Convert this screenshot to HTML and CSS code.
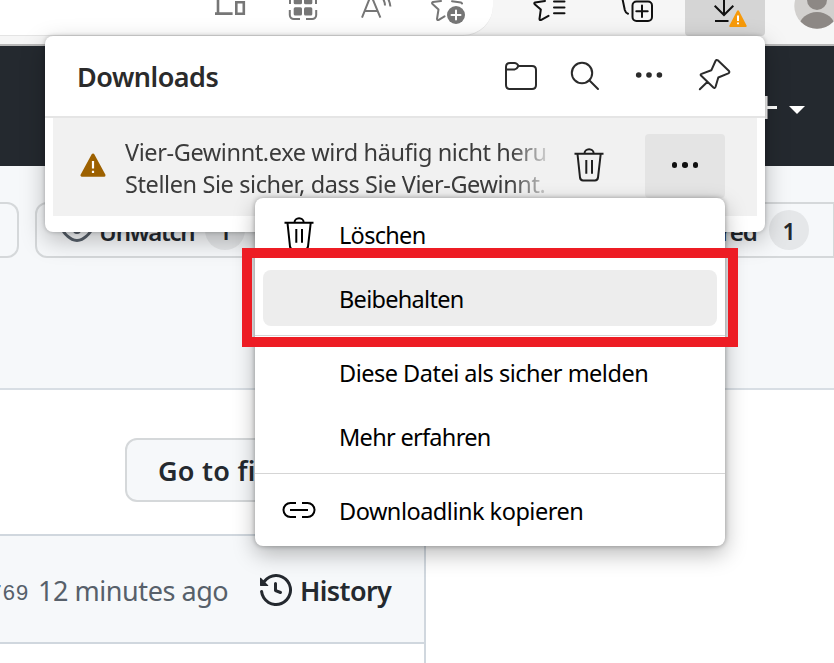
FILE: index.html
```html
<!DOCTYPE html>
<html lang="de">
<head>
<meta charset="utf-8">
<title>Downloads</title>
<link rel="stylesheet" href="styles.css">
</head>
<body>
<div class="window">
  <header class="toolbar">
    <div class="address">
      <svg class="i-devices" width="34" height="24" viewBox="213 0 34 24" fill="none" stroke="#767676" stroke-width="2.6"><path d="M218 0V13M215 13.6H232.6M236.3 2.2H243.8V13.8H236.3Z"/></svg>
      <svg class="i-qr" width="32" height="24" viewBox="287 0 32 24" fill="none" stroke="#767676" stroke-width="2"><path d="M290 0V4M316 0V4M289.8 10V15A4 4 0 0 0 294 19H300M306 19H312A4 4 0 0 0 316.2 15V10"/><g fill="#767676" stroke="none"><rect x="293.7" y="-4" width="8.3" height="8.3" rx="1.5"/><rect x="304" y="-4" width="8.3" height="8.3" rx="1.5"/><rect x="293.7" y="7.2" width="8.3" height="8.3" rx="1.5"/><rect x="304" y="7.2" width="8.3" height="8.3" rx="1.5"/></g></svg>
      <svg class="i-read" width="32" height="24" viewBox="360 0 32 24" fill="none" stroke="#767676" stroke-width="2"><path d="M362 17.7L371 -5L380.4 17.7M365 11H377.5M382.5 -2Q384.7 1 385 5.5M387 -3Q389.8 1 390.4 6.5"/></svg>
      <svg class="i-fav" width="38" height="26" viewBox="429 0 38 26" fill="none" stroke="#767676" stroke-width="2" stroke-linejoin="round" stroke-linecap="round"><path d="M441 1L433 2Q431.3 2.8 432.5 4L438.5 9.5L437 19Q437.2 20.6 438.8 19.8L444.5 16.3M452 1.2L461 2.4L462 3.5"/><circle cx="456" cy="15" r="9" fill="#767676" stroke="none"/><path d="M456 10.5V19.5M451.5 15H460.5" stroke="#fff"/></svg>
    </div>
    <svg class="i-favs" width="36" height="24" viewBox="531 0 36 24" fill="none" stroke="#111" stroke-width="2" stroke-linejoin="round" stroke-linecap="round"><path d="M545 1L535 2.4Q533.5 3 535 4.4L540.8 9.5L539.5 19Q539.8 20.7 541.3 19.8L548.5 15.8M554 1.5H564.5M554 7.5H564.5M554 13.3H564.5"/></svg>
    <svg class="i-coll" width="34" height="24" viewBox="621 0 34 24" fill="none" stroke="#111" stroke-width="2" stroke-linecap="round"><path d="M622.5 -1L624.8 10Q625.6 13 628 13.8M642 5.5V17M636.3 11.2H647.7"/><rect x="632.5" y="1.5" width="19.5" height="19.5" rx="4"/></svg>
    <div class="dl-button"><svg width="36" height="30" viewBox="713 0 36 30" fill="none" stroke="#111" stroke-width="2"><path d="M724 0V14.5M714.7 5.7L724 15L733.3 5.7M715 21H728.5"/><path d="M738 11.3L730.3 26H745.7Z" fill="#f79a0a" stroke="#f79a0a" stroke-linejoin="round"/><path d="M738 15.5V21M738 22.5V24.3" stroke="#fff"/></svg></div>
    <svg class="i-avatar" width="40" height="30" viewBox="794 0 40 30"><clipPath id="face"><circle cx="817" cy="6" r="22.7"/></clipPath><g clip-path="url(#face)"><rect x="794" y="0" width="40" height="30" fill="#d2d0ce"/><circle cx="817" cy="0" r="10" fill="#8d8885"/><ellipse cx="817" cy="27.5" rx="18" ry="15.5" fill="#8d8885"/></g></svg>
  </header>
  <nav class="site-header">
    <svg width="52" height="26" viewBox="755 95 52 26"><path d="M755 107.5H777M766 96V119" stroke="#fff" stroke-width="3"/><path d="M789 106H805L797 114Z" fill="#fff"/></svg>
  </nav>
  <section class="repo-head">
    <div class="btn prev"></div>
    <div class="btn watch">
      <svg width="32" height="32" viewBox="0 0 16 16" fill="#57606a"><path fill-rule="evenodd" d="M1.679 7.932c.412-.621 1.242-1.75 2.366-2.717C5.175 4.242 6.527 3.5 8 3.5c1.473 0 2.824.742 3.955 1.715 1.124.967 1.954 2.096 2.366 2.717a.119.119 0 010 .136c-.412.621-1.242 1.75-2.366 2.717C10.825 11.758 9.473 12.5 8 12.5c-1.473 0-2.824-.742-3.955-1.715C2.92 9.818 2.09 8.69 1.679 8.068a.119.119 0 010-.136zM8 2c-1.981 0-3.67.992-4.933 2.078C1.797 5.169.88 6.423.43 7.1a1.619 1.619 0 000 1.798c.45.678 1.367 1.932 2.637 3.024C4.329 13.008 6.019 14 8 14c1.981 0 3.67-.992 4.933-2.078 1.27-1.091 2.187-2.345 2.637-3.023a1.619 1.619 0 000-1.798c-.45-.678-1.367-1.932-2.637-3.023C11.671 2.992 9.981 2 8 2zm0 8a2 2 0 100-4 2 2 0 000 4z"/></svg>
      <span class="watch-label">Unwatch</span><span class="count">1</span>
    </div>
    <div class="btn star"><span class="star-label">Starred</span><span class="count">1</span></div>
  </section>
  <main class="content">
    <div class="goto">Go to file</div>
    <div class="commits">
      <div class="commit-bar">
        <span class="hash">769</span><span class="ago">12 minutes ago</span>
        <svg width="32" height="32" viewBox="0 0 16 16" fill="#24292f"><path fill-rule="evenodd" d="M1.643 3.143L.427 1.927A.25.25 0 000 2.104V5.75c0 .138.112.25.25.25h3.646a.25.25 0 00.177-.427L2.715 4.215a6.5 6.5 0 11-1.18 4.458.75.75 0 10-1.493.154 8.001 8.001 0 101.6-5.684zM7.75 4a.75.75 0 01.75.75v2.992l2.028.812a.75.75 0 01-.557 1.392l-2.5-1A.75.75 0 017 8.25v-3.5A.75.75 0 017.75 4z"/></svg>
        <span class="history">History</span>
      </div>
    </div>
  </main>

  <aside class="flyout">
    <div class="flyout-head">
      <h1>Downloads</h1>
      <svg width="236" height="40" viewBox="500 56 236 40" fill="none" stroke="#2b2b2b" stroke-width="2" stroke-linejoin="round" stroke-linecap="round"><path d="M506 69V67Q506 63 510 63H514.5Q517 63 518.5 66H532Q536 66 536 70V85Q536 89 532 89H510Q506 89 506 85ZM506 69.5H514.5Q517 69 518.5 66"/><circle cx="582" cy="73" r="10.2"/><path d="M589.5 80.5L598 89"/><g fill="#2b2b2b" stroke="none"><circle cx="638.7" cy="75" r="2.8"/><circle cx="649" cy="75" r="2.8"/><circle cx="659.4" cy="75" r="2.8"/></g><path d="M717.8 60.3L729 71Q730 72.4 728.3 73.3L718.3 77.5L715.5 87Q714.8 88.8 713.4 87.5L701 75.5Q700 74.4 701.6 73.9L711.3 70.3L715.5 61Q716.4 59.3 717.8 60.3ZM699.8 89.2L707.3 82"/></svg>
    </div>
    <div class="download">
      <svg class="warn" width="26" height="24" viewBox="0 0 26 24"><path d="M13 2L2 22.2H24Z" fill="#9d6100" stroke="#9d6100" stroke-width="3" stroke-linejoin="round"/><path d="M13 8V15.5M13 17.7V20" stroke="#fff" stroke-width="2.2"/></svg>
      <div class="message"><p class="line1">Vier-Gewinnt.exe wird häufig nicht herun</p><p class="line2">Stellen Sie sicher, dass Sie Vier-Gewinnt.</p></div>
      <svg class="bin" width="30" height="34" viewBox="574 148 30 34" fill="none" stroke="#1f1f1f" stroke-width="2"><path d="M574.5 153.8H603.5M584.5 153.5A4.6 4.3 0 0 1 593.7 153.5M577.5 154L580 177.5Q580.4 180.4 583 180.4H595Q597.6 180.4 598 177.5L600.7 154M586.3 160V173.7M592 160V173.7"/></svg>
      <div class="more"><i></i><i></i><i></i></div>
    </div>
  </aside>

  <div class="menu">
    <div class="item"><svg width="30" height="34" viewBox="574 148 30 34" fill="none" stroke="#000" stroke-width="2"><path d="M574.5 153.8H603.5M584.5 153.5A4.6 4.3 0 0 1 593.7 153.5M577.5 154L580 177.5Q580.4 180.4 583 180.4H595Q597.6 180.4 598 177.5L600.7 154M586.3 160V173.7M592 160V173.7"/></svg><span class="tight">Löschen</span></div>
    <div class="item active"><span class="tight">Beibehalten</span></div>
    <hr>
    <div class="item"><span>Diese Datei als sicher melden</span></div>
    <div class="item"><span class="tight">Mehr erfahren</span></div>
    <hr>
    <div class="item"><svg class="link" width="34" height="18" viewBox="282 501 34 18" fill="none" stroke="#000" stroke-width="2"><path d="M296 503H290.5A7 7 0 0 0 290.5 517H296M302 503H307.5A7 7 0 0 1 307.5 517H302M290 510H308"/></svg><span>Downloadlink kopieren</span></div>
  </div>
  <div class="highlight"></div>
</div>
</body>
</html>
```
FILE: styles.css
```css
* { box-sizing: border-box; }
body { margin: 0; font-family: "Noto Sans", "Open Sans", sans-serif; }
svg { display: block; flex: none; }
span, h1, p { white-space: nowrap; }

.window { position: relative; width: 834px; height: 663px; overflow: hidden; background: #fff; }

.toolbar { display: flex; height: 46px; background: #f6f6f6; border-bottom: 2px solid #b9b9b9; }
.address { display: flex; width: 493px; height: 36px; background: #fff; border-bottom: 1px solid #e4e4e4; border-bottom-right-radius: 30px; }
.i-devices { margin-left: 213px; }
.i-qr { margin-left: 40px; }
.i-read { margin-left: 41px; }
.i-fav { margin-left: 37px; }
.i-favs { margin-left: 38px; }
.i-coll { margin-left: 54px; }
.dl-button { width: 80px; height: 36px; margin-left: 30px; padding-left: 28px; background: #d5d5d5; border-radius: 0 0 4px 4px; }
.i-avatar { margin-left: 29px; }

.site-header { height: 120px; padding: 49px 27px 0 0; display: flex; justify-content: flex-end; align-items: flex-start; background: #24292f; }

.repo-head { display: flex; height: 224px; padding-top: 36px; background: #f6f8fa; border-bottom: 2px solid #d8dee4; }
.btn { display: flex; align-items: center; height: 56px; border: 2px solid #d5d8da; border-radius: 12px; background: #f6f8fa; font-size: 24px; font-weight: 600; color: #24292f; }
.prev { width: 19px; border-left: 0; border-radius: 0 12px 12px 0; }
.watch { width: 300px; margin-left: 16px; padding-left: 24px; }
.watch-label { width: 107px; padding: 2px 0 0 6px; letter-spacing: -1.3px; }
.star { width: 234px; margin-left: 265px; padding-right: 24px; justify-content: flex-end; border-radius: 12px 0 0 12px; border-right-width: 1px; }
.star-label { margin-right: 12px; padding-top: 2px; letter-spacing: -0.9px; }
.count { display: flex; align-items: center; justify-content: center; width: 40px; height: 40px; margin-left: 5px; border-radius: 50%; background: #e5e7e9; font-size: 23px; font-weight: 600; padding-top: 2px; }
.star .count { margin-left: 0; }

.goto { display: flex; align-items: center; width: 190px; height: 64px; margin: 48px 0 0 125px; padding: 1px 0 0 31px; border: 2px solid #d5d8da; border-radius: 12px; background: #f6f8fa; font-size: 27px; font-weight: 600; letter-spacing: 0.25px; color: #24292f; }
.commits { width: 426px; height: 140px; margin-top: 32px; border: 2px solid #d0d7de; border-left: 0; }
.commit-bar { display: flex; align-items: center; height: 108px; border-bottom: 2px solid #d0d7de; background: #f6f8fa; color: #57606a; padding-top: 2px; }
.hash { width: 49px; margin-left: -11px; font: 22px "Liberation Mono", monospace; padding-top: 8px; }
.ago { width: 222px; font-size: 27px; letter-spacing: -0.45px; }
.history { margin-left: 8px; font-size: 27px; font-weight: 600; letter-spacing: -0.6px; color: #24292f; }

.flyout { position: absolute; left: 45px; top: 36px; width: 720px; height: 196px; border-radius: 8px; background: #fff; box-shadow: 0 8px 24px rgba(0,0,0,.26), 0 0 4px rgba(0,0,0,.24); }
.flyout-head { display: flex; align-items: center; justify-content: space-between; height: 82px; padding: 0 29px 0 32px; border-bottom: 2px solid #e5e5e5; }
h1 { margin: 0; font-size: 27px; font-weight: 600; letter-spacing: -0.5px; color: #2b2b2b; }
.download { display: flex; align-items: center; height: 98px; margin: 0 8px; padding: 0 32px 0 27px; background: #f1f1f1; }
.warn { margin-bottom: 4px; }
.message { width: 422px; height: 70px; margin-left: 19px; overflow: hidden; font-size: 23.5px; line-height: 32px; letter-spacing: -0.4px; color: #3b3b3b; -webkit-mask-image: linear-gradient(90deg, #000 385px, transparent 430px); mask-image: linear-gradient(90deg, #000 385px, transparent 430px); }
p { margin: 0; }
.line1 { padding-top: 4px; }
.bin { margin: 0 0 4px 27px; }
.more { display: flex; align-items: center; justify-content: center; gap: 5px; width: 80px; height: 64px; margin: -2px 0 0 41px; padding-bottom: 2px; border-radius: 4px; background: #e4e4e4; }
.more i { width: 5.6px; height: 5.6px; border-radius: 50%; background: #111; }

.menu { position: absolute; left: 255px; top: 198px; width: 470px; height: 348px; border-radius: 8px; background: #fff; box-shadow: 0 8px 22px rgba(0,0,0,.28), 0 0 5px rgba(0,0,0,.32); }
.item { display: grid; grid-template-columns: 48px 1fr; column-gap: 8px; align-items: center; height: 56px; margin: 8px 8px 0; padding-left: 20px; border-radius: 8px; font-size: 23.5px; letter-spacing: -0.5px; color: #000; }
.item svg { margin-left: 1px; }
.item .link { margin-left: -1px; }
.item span { grid-column: 2; grid-row: 1; padding-top: 1px; }
.item .tight { letter-spacing: -0.7px; }
.active { background: #ededed; }
hr { height: 1px; margin: 9px 0 0; border: 0; background: #d5d5d5; }

.highlight { position: absolute; left: 242px; top: 248px; width: 496px; height: 99px; border: 10px solid #ed1c24; }
```
